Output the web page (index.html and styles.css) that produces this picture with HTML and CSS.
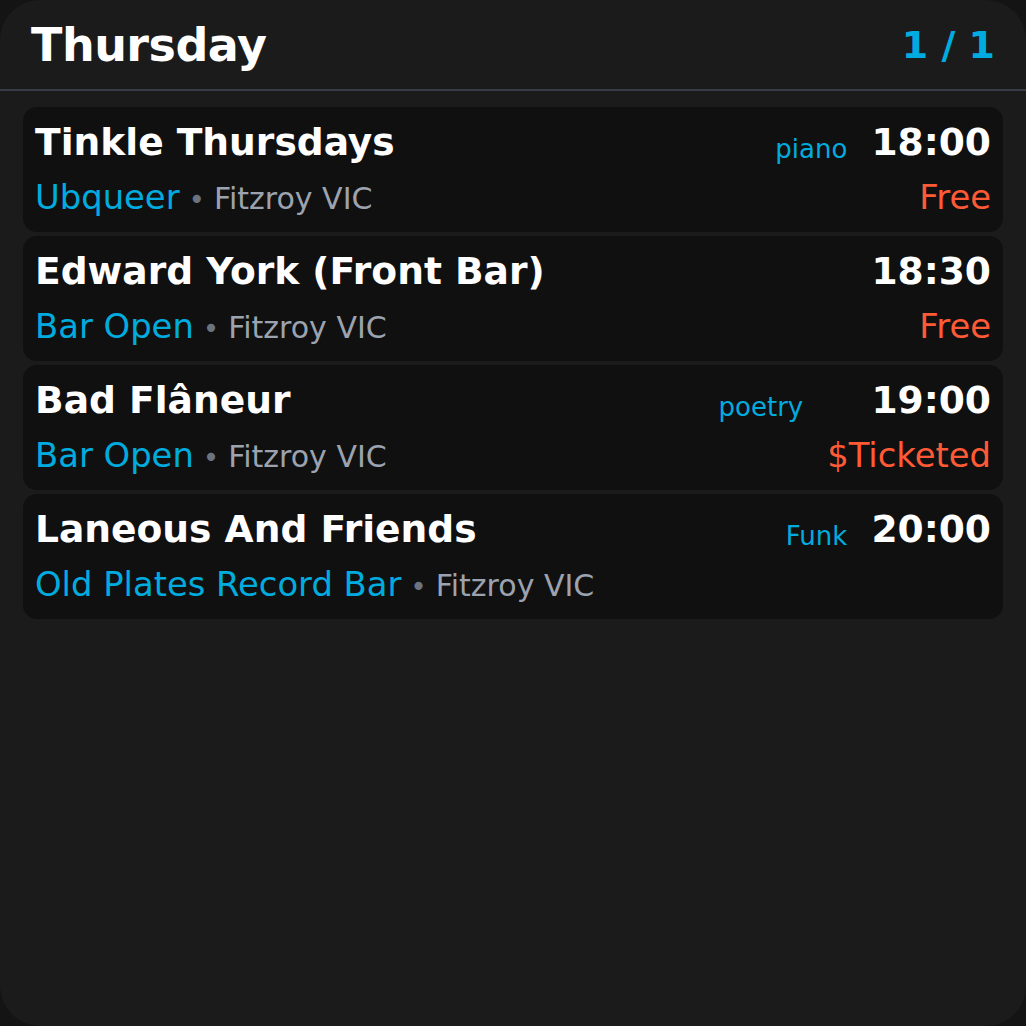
FILE: index.html
```html
<!DOCTYPE html>
<html>
<head>
<meta charset="utf-8">
<link rel="stylesheet" href="styles.css">
</head>
<body>
<div class="frame">
  <header class="header">
    <h1 class="day">Thursday</h1>
    <div class="pager">1 / 1</div>
  </header>
  <main class="list">
    <div class="card">
      <div class="title">Tinkle Thursdays</div>
      <div class="tag">piano</div>
      <div class="time">18:00</div>
      <div class="place"><span class="venue">Ubqueer</span><span class="dot"> • </span><span class="loc">Fitzroy VIC</span></div>
      <div class="price">Free</div>
    </div>
    <div class="card">
      <div class="title">Edward York (Front Bar)</div>
      <div class="tag"></div>
      <div class="time">18:30</div>
      <div class="place"><span class="venue">Bar Open</span><span class="dot"> • </span><span class="loc">Fitzroy VIC</span></div>
      <div class="price">Free</div>
    </div>
    <div class="card">
      <div class="title">Bad Flâneur</div>
      <div class="tag">poetry</div>
      <div class="time">19:00</div>
      <div class="place"><span class="venue">Bar Open</span><span class="dot"> • </span><span class="loc">Fitzroy VIC</span></div>
      <div class="price">$Ticketed</div>
    </div>
    <div class="card">
      <div class="title">Laneous And Friends</div>
      <div class="tag">Funk</div>
      <div class="time">20:00</div>
      <div class="place"><span class="venue">Old Plates Record Bar</span><span class="dot"> • </span><span class="loc">Fitzroy VIC</span></div>
      <div class="price"></div>
    </div>
  </main>
</div>
</body>
</html>
```

FILE: styles.css
```css
html, body {
  margin: 0;
  padding: 0;
  background: #141414;
}
body {
  font-family: "DejaVu Sans", Verdana, sans-serif;
  color: #ffffff;
}
.frame {
  width: 1026px;
  height: 1026px;
  background: #1b1b1b;
  border-radius: 40px;
  overflow: hidden;
  box-sizing: border-box;
}
.header {
  height: 91px;
  box-sizing: border-box;
  padding: 0 31px 0 31px;
  display: flex;
  align-items: center;
  justify-content: space-between;
  border-bottom: 2px solid #363b47;
}
.day {
  margin: 0;
  font-size: 46px;
  font-weight: bold;
  letter-spacing: -0.5px;
}
.pager {
  font-size: 38px;
  font-weight: bold;
  color: #00acdf;
}
.list {
  padding: 16px 23px 0 23px;
  display: flex;
  flex-direction: column;
  gap: 4px;
}
.card {
  background: #101010;
  border-radius: 14px;
  padding: 14px 12px 15px 12px;
  display: grid;
  grid-template-columns: 1fr auto auto;
  column-gap: 24px;
  row-gap: 15px;
  align-items: baseline;
  height: 125px;
  box-sizing: border-box;
}
.title {
  font-size: 37.6px;
  line-height: 43px;
  font-weight: bold;
  white-space: nowrap;
}
.tag {
  font-size: 26px;
  color: #00acdf;
  align-self: end;
}
.time {
  font-size: 37.6px;
  line-height: 43px;
  font-weight: bold;
  text-align: right;
}
.place {
  grid-column: 1 / 3;
  font-size: 33.8px;
  line-height: 38px;
  white-space: nowrap;
}
.venue {
  color: #00acdf;
}
.dot {
  color: #6b7280;
  font-size: 28px;
}
.loc {
  color: #9ca3af;
  font-size: 30px;
}
.price {
  font-size: 33.8px;
  line-height: 38px;
  color: #ff5a36;
  text-align: right;
}
```
